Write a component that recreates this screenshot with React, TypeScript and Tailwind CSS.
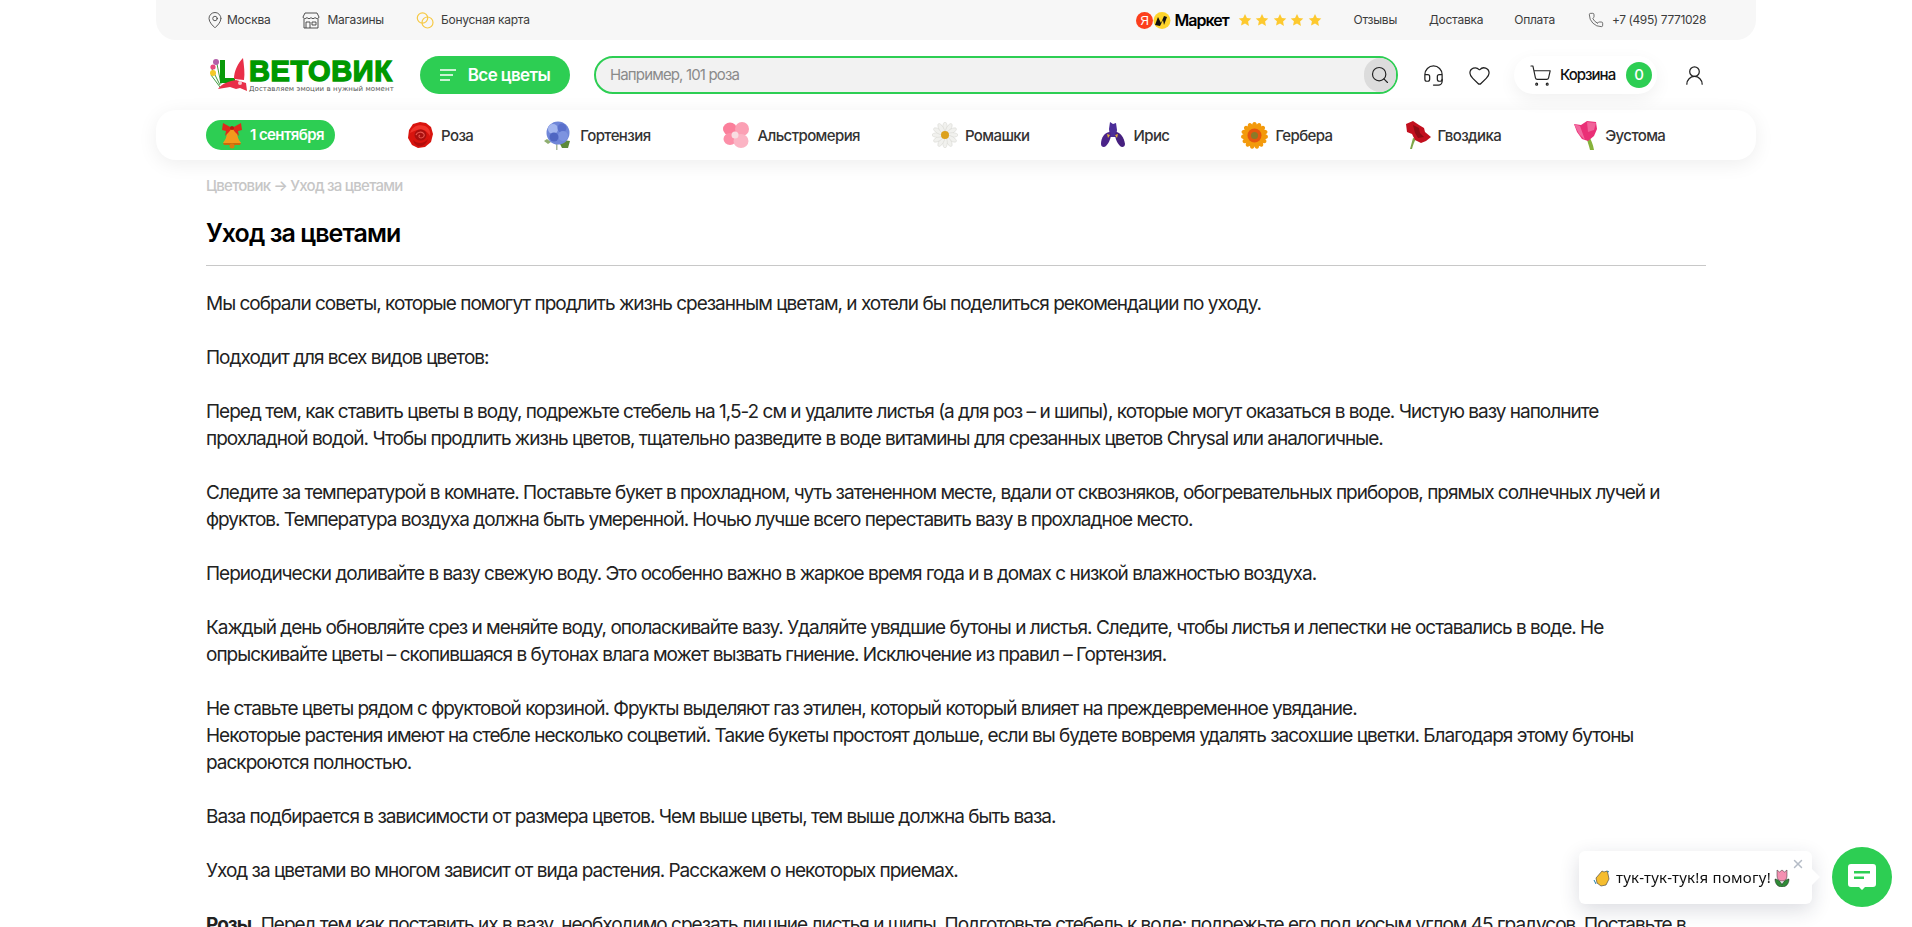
import { MapPin, Phone, Heart, Headset, ShoppingCart, UserRound, Search, X } from 'lucide-react';

const Star = () => (
    <svg width="14" height="14" viewBox="0 0 24 24" fill="#fdc92f">
        <path d="M12 1.5l3.3 6.9 7.5 1-5.5 5.2 1.4 7.5L12 18l-6.7 3.6 1.4-7.5L1.2 9.400l7.500-1z" />
    </svg>
);

const Rose = () => (
    <svg width="27" height="28" viewBox="0 0 27 28">
        <path d="M13 1l6 1 5 4 2 7-2 8-6 5-7 1-6-3-4-7 1-8 4-6z" fill="#d8140e" />
        <path d="M3 12C5 5 12 3 18 5c4 2 6 6 5 10-3-5-8-8-13-6-3 1-5 2-7 3z" fill="#f0332a" />
        <path d="M6 19c4 4 11 4 15-1-2 6-6 8-10 7-3-1-4-3-5-6z" fill="#b20d0b" />
        <ellipse cx="13.500" cy="14" rx="6" ry="5.500" fill="#a90f0e" />
        <path d="M9 14c1-3 6-4 8-1 1 2-1 4-3 4s-3-2-1-3" fill="none" stroke="#e9574f" strokeWidth="1.100" />
    </svg>
);

const Hydrangea = () => (
    <svg width="30" height="30" viewBox="0 0 30 30" className="-ml-[2px]">
        <path d="M16 22l4-2 7 1-2 7-6 0z" fill="#5d8a3a" />
        <rect x="13" y="24" width="1.500" height="6" fill="#a9b99a" />
        <path d="M1 21l3-2 4 3-3 2z" fill="#8fae70" />
        <circle cx="15" cy="13" r="11.500" fill="#6f86d8" />
        <circle cx="10" cy="9" r="5" fill="#a3b6ef" />
        <circle cx="19" cy="8" r="4.500" fill="#5a70cc" />
        <circle cx="20" cy="16" r="5" fill="#7d93e0" />
        <circle cx="11" cy="17" r="4.500" fill="#4f66c2" />
    </svg>
);

const Alstro = () => (
    <svg width="28" height="28" viewBox="0 0 28 28">
        <ellipse cx="8" cy="8" rx="7" ry="6.500" fill="#fb7f9b" />
        <ellipse cx="20" cy="8" rx="7" ry="7" fill="#fba0b4" />
        <ellipse cx="8" cy="18" rx="6.500" ry="6" fill="#fc8fa8" />
        <ellipse cx="19" cy="20" rx="7.500" ry="7" fill="#fbb4c4" />
        <circle cx="13" cy="14" r="3.500" fill="#f8dde2" />
    </svg>
);

const Daisy = () => (
    <svg width="26" height="26" viewBox="0 0 26 26">
        {[0, 30, 60, 90, 120, 150, 180, 210, 240, 270, 300, 330].map((a) => (
            <ellipse key={a} cx="13" cy="5.500" rx="2.300" ry="5.500" fill="#f1f1ee" stroke="#d4d4ce" strokeWidth="0.500" transform={`rotate(${a} 13 13)`} />
        ))}
        <circle cx="13" cy="13" r="4" fill="#dca11d" />
    </svg>
);

const Iris = () => (
    <svg width="26" height="28" viewBox="0 0 26 28" className="-ml-[1px]">
        <path d="M10 1l3 2 3-1 1 7-1 7h-6l-1-8z" fill="#4b2d98" />
        <path d="M10 11C5 11 1 16 1 23c0 3 3 4 5 2s5-7 5-12z" fill="#4a2389" />
        <path d="M16 11c4 0 8 5 9 12 0 3-3 4-5 2s-5-7-5-12z" fill="#46207f" />
        <path d="M7 13l3 1-2 3zM18 13l-3 1 2 3z" fill="#e3b23c" />
    </svg>
);

const Gerbera = () => (
    <svg width="27" height="27" viewBox="0 0 27 27">
        {[0, 24, 48, 72, 96, 120, 144, 168, 192, 216, 240, 264, 288, 312, 336].map((a) => (
            <ellipse key={a} cx="13.500" cy="5" rx="2.600" ry="5" fill="#f39a0c" transform={`rotate(${a} 13.500 13.500)`} />
        ))}
        <circle cx="13.500" cy="13.500" r="7" fill="#e5560f" />
        <circle cx="13.500" cy="13.500" r="3.500" fill="#8a7a28" />
    </svg>
);

const Carnation = () => (
    <svg width="26" height="28" viewBox="0 0 26 28">
        <path d="M8 17c-1 4-2 7-3 11h2c1-4 2-7 4-10z" fill="#7fa64a" />
        <path d="M1 3l7-3 6 4 5 3 1 4 6 5-5 4-5 2-6-3-3-6-5-2z" fill="#c20f1e" />
        <path d="M8 4l6 3 1 5 4 4-6 1-3-5z" fill="#8f0a14" />
    </svg>
);

const Tulip = () => (
    <svg width="25" height="30" viewBox="0 0 25 30">
        <path d="M13 16c1 5 3 9 4 14h4c-1-6-3-10-5-14z" fill="#86b23b" />
        <path d="M1 4l7 1 6-4 9 1 1 7-3 7-6 5-6-2-5-7z" fill="#ea2f76" />
        <path d="M1 4l6 2 5 14-6-6z" fill="#f26aa0" />
        <path d="M14 2l9 1-2 7-6 2z" fill="#f0639a" />
    </svg>
);

const Bell = () => (
    <svg width="22" height="27" viewBox="0 0 22 27">
        <path d="M11 7C7 7 6 10 5.500 14c-.4 3-2.500 5-3.500 7h18c-1-2-3.100-4-3.500-7C16 10 15 7 11 7z" fill="#f39a1c" />
        <path d="M2 21h18l-1 2H3z" fill="#c96a0c" />
        <circle cx="11" cy="24" r="2.500" fill="#d97a10" />
        <path d="M11 6L2 1 1 8l4 1-1 5 4-4zM11 6l9-5 1 7-4 1 1 5-4-4z" fill="#de2a1c" />
        <circle cx="11" cy="6" r="2" fill="#b81c12" />
    </svg>
);

const Clap = () => (
    <svg width="18" height="18" viewBox="0 0 18 18">
        <path d="M3 9l6-7 2 1 3-1 1 3 1 5-3 6-5 1-4-3z" fill="#f5bd2f" stroke="#3a3a3a" strokeWidth="0.600" />
        <path d="M1 11l2 4M14 2l2 1" stroke="#1d7ea8" strokeWidth="1" />
    </svg>
);

const TulipEmoji = () => (
    <svg width="18" height="18" viewBox="0 0 18 18" className="-ml-[3px]">
        <path d="M2 10c2 0 6 2 7 6 1-4 5-6 7-6 0 5-3 8-7 8s-7-3-7-8z" fill="#2f8a36" stroke="#1e1e1e" strokeWidth="0.500" />
        <path d="M4 1l2.500 2L9 1l2.500 2L14 1v6c0 3-2 5-5 5S4 10 4 7z" fill="#f48fb1" stroke="#333" strokeWidth="0.500" />
    </svg>
);

const navItems = [
    { title: 'Роза', icon: <Rose /> },
    { title: 'Гортензия', icon: <Hydrangea /> },
    { title: 'Альстромерия', icon: <Alstro /> },
    { title: 'Ромашки', icon: <Daisy /> },
    { title: 'Ирис', icon: <Iris /> },
    { title: 'Гербера', icon: <Gerbera /> },
    { title: 'Гвоздика', icon: <Carnation /> },
    { title: 'Эустома', icon: <Tulip /> },
];

function Logo() {
    return (
        <div className="flex items-start w-[188px] h-[40px] shrink-0">
            <svg width="46" height="40" viewBox="0 0 46 40" className="shrink-0">
                <path d="M5 20l9 12M6 14l8 16M11 9l4 20" stroke="#3f9a3f" strokeWidth="1" fill="none" />
                <circle cx="10" cy="7" r="3" fill="#b45fa8" />
                <circle cx="7" cy="12" r="2.600" fill="#e8487a" />
                <circle cx="7" cy="18" r="3" fill="#f5c928" />
                <path d="M14 5h5v18h10v5H14z" fill="#0a9a0a" />
                <path d="M37 3c1 8 2 15 1 22l-10-1c0-8 4-16 9-21z" fill="#e92f49" />
                <path d="M12 34c4-6 12-8 18-9l10 3 1 8-7-3-4 1-6-2z" fill="#e92f49" />
                <circle cx="34" cy="28" r="2" fill="#f7c7cf" />
            </svg>
            <div className="flex flex-col -ml-[3px]">
                <span className="font-['Liberation_Sans',sans-serif] font-bold text-[29px] leading-[27px] mt-[3px] text-[#009900] tracking-[0.6px] [-webkit-text-stroke:1.4px_#009900]">ВЕТОВИК</span>
                <span className="font-['DejaVu_Sans',sans-serif] text-[7px] leading-[8px] text-[#555555] whitespace-nowrap tracking-[0.08px]">Доставляем эмоции в нужный момент</span>
            </div>
        </div>
    );
}

function TopBar() {
    return (
        <div className="h-[40px] bg-[#f7f7f7] rounded-b-[20px] px-[50px] flex items-center justify-between text-[12px] text-[#3c3c3c] tracking-[-0.25px]">
            <div className="flex items-center gap-[32px]">
                <div className="flex items-center gap-[3px]">
                    <MapPin size={18} strokeWidth={1.1} />
                    <span>Москва</span>
                </div>
                <div className="flex items-center gap-[7px]">
                    <svg width="18" height="17" viewBox="0 0 18 17" fill="none" stroke="#3c3c3c" strokeWidth="0.900">
                        <path d="M3 1h12l2 4c0 2-3 2-4 .500-1 1.500-3 1.500-4 0-1 1.500-3 1.500-4 0C4 7 1 7 1 5z" />
                        <path d="M2 7v9h14V7M4 16v-6h4v6M10 10h4v3h-4z" />
                    </svg>
                    <span>Магазины</span>
                </div>
                <div className="flex items-center gap-[7px]">
                    <svg width="18" height="17" viewBox="0 0 18 17" fill="none" stroke="#f6c945" strokeWidth="1.200">
                        <circle cx="6.500" cy="6" r="5.200" />
                        <circle cx="11.500" cy="10.500" r="5.500" />
                    </svg>
                    <span>Бонусная карта</span>
                </div>
            </div>
            <div className="flex items-center">
                <svg width="35" height="17" viewBox="0 0 35 17" className="shrink-0 mr-[4px]">
                    <circle cx="8.500" cy="8.500" r="8.500" fill="#fc3f1d" />
                    <text x="8.500" y="13" textAnchor="middle" fontSize="12" fontFamily="Liberation Sans" fill="#ffffff">Я</text>
                    <circle cx="26" cy="8.500" r="8.500" fill="#fed42b" />
                    <path d="M19 13l3-8 3 6 3-7 3 1-3 8-1-5-3 6z" fill="#111111" />
                </svg>
                <span className="text-[16px] leading-none font-semibold text-black tracking-[-1px] w-[54px]">Маркет</span>
                <div className="flex items-center gap-[3.500px] ml-[9px] w-[84px]">
                    <Star /><Star /><Star /><Star /><Star />
                </div>
                <span className="ml-[32px]">Отзывы</span>
                <span className="ml-[32px]">Доставка</span>
                <span className="ml-[31px]">Оплата</span>
                <Phone size={16} strokeWidth={1.1} className="ml-[33px]" />
                <span className="ml-[8px] tracking-[-0.4px]">+7 (495) 7771028</span>
            </div>
        </div>
    );
}

function MainHeader() {
    return (
        <div className="flex items-center mt-[16px] h-[38px] px-[50px]">
            <Logo />
            <button className="ml-[26px] w-[150px] h-[38px] rounded-full bg-[#2dce53] text-white text-[17px] font-semibold flex items-center justify-center gap-[12px] tracking-[-0.6px]">
                <svg width="16" height="12" viewBox="0 0 16 12" stroke="#ffffff" strokeWidth="1.300" fill="none">
                    <path d="M0 1h16M0 6h13M0 11h10" />
                </svg>
                <span className="pt-[1px]">Все цветы</span>
            </button>
            <div className="ml-[24px] w-[804px] h-[38px] rounded-full border-2 border-[#2dce53] bg-[#f2f2f2] flex items-center pl-[14px] relative">
                <span className="text-[15px] text-[#8a8a8a] tracking-[-0.85px]">Например, 101 роза</span>
                <div className="ml-auto w-[32px] h-[34px] rounded-full bg-[#dcdcdc] flex items-center justify-center">
                    <Search size={20} strokeWidth={1.4} color="#222222" />
                </div>
            </div>
            <Headset size={23} strokeWidth={1.3} color="#222222" className="ml-[24px]" />
            <Heart size={23} strokeWidth={1.3} color="#222222" className="ml-[23px]" />
            <div className="ml-[23px] w-[143px] h-[38px] rounded-full bg-white shadow-[0_6px_18px_rgba(0,0,0,0.06)] flex items-center pl-[15px]">
                <ShoppingCart size={23} strokeWidth={1.2} color="#222222" />
                <span className="ml-[8px] w-[57px] text-[15px] font-medium text-[#111111] tracking-[-1px]">Корзина</span>
                <span className="ml-[9px] w-[26px] h-[26px] rounded-full bg-[#2dce53] text-white text-[15px] font-medium flex items-center justify-center">0</span>
            </div>
            <UserRound size={23} strokeWidth={1.3} color="#222222" className="ml-[26px]" />
        </div>
    );
}

function Nav() {
    return (
        <div className="mt-[16px] h-[50px] rounded-[20px] bg-white shadow-[0_4px_20px_rgba(0,0,0,0.07)] pl-[50px] flex items-center gap-[72px] text-[15px] leading-[20px] font-medium text-[#333333] tracking-[-0.6px]">
            <div className="w-[129px] h-[30px] rounded-full bg-[#2dce53] text-white font-semibold flex items-center pl-[15px] gap-[7px]">
                <Bell />
                <span>1 сентября</span>
            </div>
            {navItems.map((item) => (
                <div key={item.title} className="flex items-center gap-[7px]">
                    {item.icon}
                    <span className="pt-[1px]">{item.title}</span>
                </div>
            ))}
        </div>
    );
}

function ArticleText() {
    return (
        <div className="w-[1490px] text-[19px] leading-[27px] text-[#222222] tracking-[-1px] mt-[24px]">
            Мы собрали советы, которые помогут продлить жизнь срезанным цветам, и хотели бы поделиться рекомендации по уходу.<br /><br />
            Подходит для всех видов цветов:<br /><br />
            Перед тем, как ставить цветы в воду, подрежьте стебель на 1,5-2 см и удалите листья (а для роз – и шипы), которые могут оказаться в воде. Чистую вазу наполните прохладной водой. Чтобы продлить жизнь цветов, тщательно разведите в воде витамины для срезанных цветов Chrysal или аналогичные.<br /><br />
            Следите за температурой в комнате. Поставьте букет в прохладном, чуть затененном месте, вдали от сквозняков, обогревательных приборов, прямых солнечных лучей и фруктов. Температура воздуха должна быть умеренной. Ночью лучше всего переставить вазу в прохладное место.<br /><br />
            Периодически доливайте в вазу свежую воду. Это особенно важно в жаркое время года и в домах с низкой влажностью воздуха.<br /><br />
            Каждый день обновляйте срез и меняйте воду, ополаскивайте вазу. Удаляйте увядшие бутоны и листья. Следите, чтобы листья и лепестки не оставались в воде. Не опрыскивайте цветы – скопившаяся в бутонах влага может вызвать гниение. Исключение из правил – Гортензия.<br /><br />
            Не ставьте цветы рядом с фруктовой корзиной. Фрукты выделяют газ этилен, который который влияет на преждевременное увядание.<br />
            Некоторые растения имеют на стебле несколько соцветий. Такие букеты простоят дольше, если вы будете вовремя удалять засохшие цветки. Благодаря этому бутоны раскроются полностью.<br /><br />
            Ваза подбирается в зависимости от размера цветов. Чем выше цветы, тем выше должна быть ваза.<br /><br />
            Уход за цветами во многом зависит от вида растения. Расскажем о некоторых приемах.<br /><br />
            <b className="font-bold">Розы.</b> Перед тем как поставить их в вазу, необходимо срезать лишние листья и шипы. Подготовьте стебель к воде: подрежьте его под косым углом 45 градусов. Поставьте в
        </div>
    );
}

export default function App() {
    return (
        <div className="h-[927px] overflow-hidden bg-white font-['Inter',sans-serif] relative">
            <div className="w-[1600px] mx-auto">
                <TopBar />
                <MainHeader />
                <Nav />
                <div className="px-[50px]">
                    <div className="mt-[17px] text-[15px] leading-[18px] font-medium text-[#c6c6c6] tracking-[-0.75px]">Цветовик → Уход за цветами</div>
                    <h1 className="mt-[21px] text-[25px] leading-[34px] font-semibold text-black tracking-[-0.95px]">Уход за цветами</h1>
                    <div className="mt-[15px] border-t border-[#c8c8c8]" />
                    <ArticleText />
                </div>
            </div>
            <div className="fixed left-[1579px] top-[851px] w-[233px] h-[53px] rounded-[6px] bg-white shadow-[0_6px_20px_rgba(30,40,70,0.16)] flex items-center pl-[14px] gap-[5px] font-['Noto_Sans',sans-serif] text-[15px] text-[#111111]">
                <Clap />
                <span className="tracking-[0.25px]">тук-тук-тук!я помогу!</span>
                <TulipEmoji />
                <X size={14} strokeWidth={2.5} color="#b5bcc6" className="absolute right-[7px] top-[6px]" />
                <div className="absolute -right-[8px] top-[18px] w-0 h-0 border-y-[8px] border-y-transparent border-l-[8px] border-l-white" />
            </div>
            <div className="fixed left-[1832px] top-[847px] w-[60px] h-[60px] rounded-full bg-[#2dce53] flex items-center justify-center">
                <svg width="28" height="26" viewBox="0 0 28 26">
                    <path d="M3 0h22a3 3 0 013 3v17a3 3 0 01-3 3h-8l-3 3-3-3H3a3 3 0 01-3-3V3a3 3 0 013-3z" fill="#ffffff" />
                    <path d="M6 7h16v2.500H6zM6 12.500h10V15H6z" fill="#2dce53" />
                </svg>
            </div>
        </div>
    );
}
